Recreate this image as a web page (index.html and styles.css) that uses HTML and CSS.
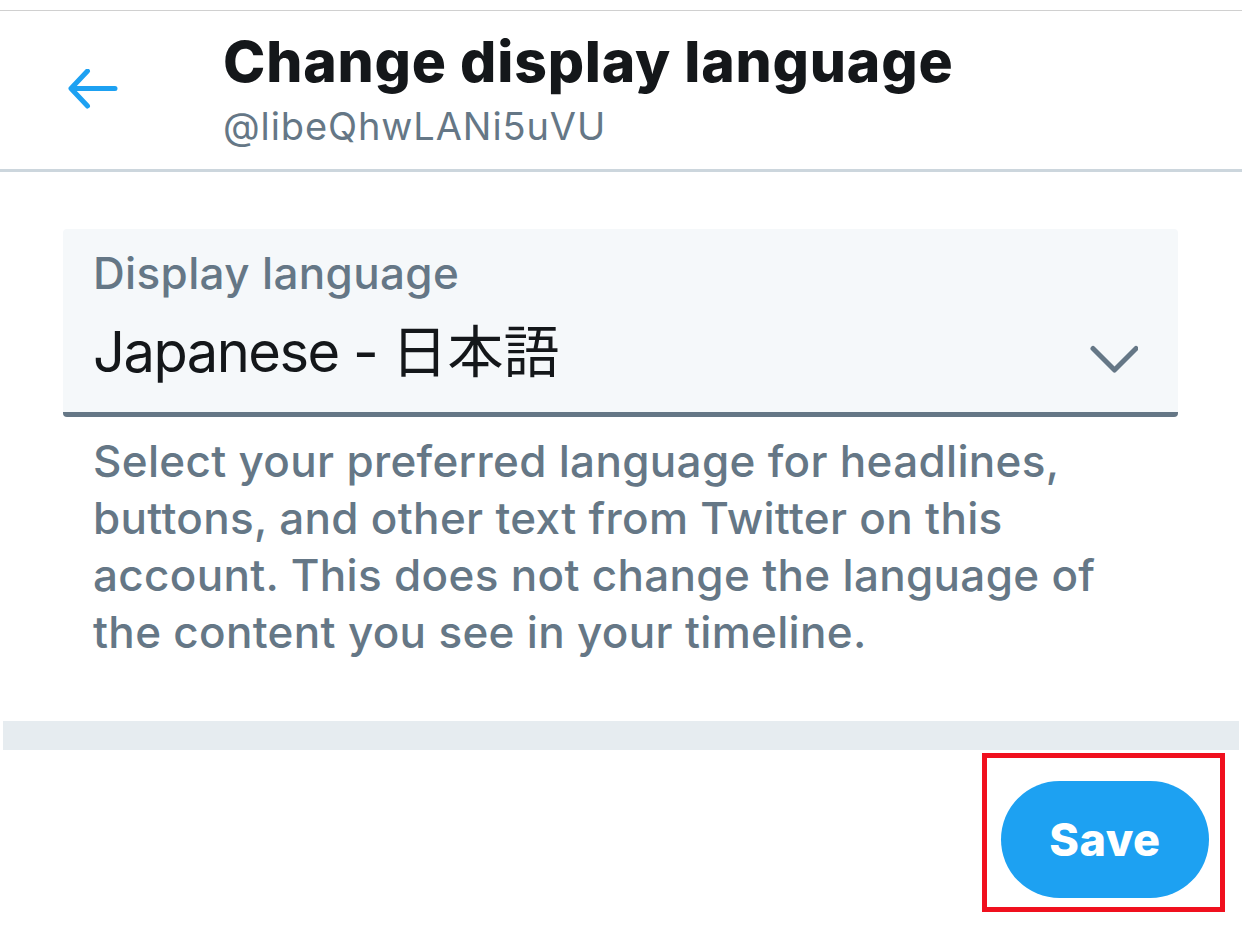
FILE: index.html
```html
<!DOCTYPE html>
<html lang="en">
<head>
<meta charset="utf-8">
<title>Change display language</title>
<link rel="stylesheet" href="styles.css">
</head>
<body>
<div class="topline"></div>
<header class="header">
  <div class="back">
    <svg class="back-icon" width="50" height="40" viewBox="0 0 50 40">
      <path d="M47 19.5H3.5M19.5 2L3 19.5L19.5 37" fill="none" stroke="#1da1f2" stroke-width="5" stroke-linecap="round" stroke-linejoin="round"/>
    </svg>
  </div>
  <div class="titles">
    <div class="title">Change display language</div>
    <div class="handle">@libeQhwLANi5uVU</div>
  </div>
</header>
<main class="content">
  <div class="select">
    <div class="select-text">
      <div class="select-label">Display language</div>
      <div class="select-value"><span class="latin">Japanese - </span>日本語</div>
    </div>
    <svg class="chevron" width="48" height="30" viewBox="0 0 48 30">
      <path d="M3 3.5L24.5 25L46 3.5" fill="none" stroke="#657786" stroke-width="5" stroke-linecap="round" stroke-linejoin="round"/>
    </svg>
  </div>
  <p class="desc">Select your preferred language for headlines, buttons, and other text from Twitter on this account. This does not change the language of the content you see in your timeline.</p>
</main>
<div class="divider"></div>
<div class="actions">
  <div class="save-wrap">
    <button class="save">Save</button>
    <div class="highlight"></div>
  </div>
</div>
</body>
</html>
```

FILE: styles.css
```css
html, body {
  margin: 0;
  padding: 0;
  background: #ffffff;
}
body {
  font-family: Inter, "Noto Sans", "Noto Sans CJK JP", sans-serif;
  width: 1242px;
  height: 932px;
  overflow: hidden;
}
.topline {
  height: 10px;
  border-bottom: 1px solid #d0d0d0;
}
.header {
  display: flex;
  align-items: center;
  padding: 17px 0 20px 68px;
  border-bottom: 3px solid #ccd6dd;
}
.back {
  width: 50px;
  height: 40px;
  margin-right: 105px;
  display: flex;
}
.titles {
  display: flex;
  flex-direction: column;
  gap: 8px;
}
.title {
  font-size: 57px;
  line-height: 68px;
  font-weight: 800;
  color: #14171a;
  letter-spacing: 0.8px;
}
.handle {
  font-size: 38px;
  line-height: 45px;
  font-weight: 400;
  color: #657786;
  letter-spacing: 0.9px;
}
.content {
  padding: 57px 64px 0 63px;
}
.select {
  display: flex;
  align-items: flex-start;
  background: #f5f8fa;
  border-bottom: 5px solid #657786;
  border-radius: 4px;
  padding: 16px 40px 25px 30px;
}
.select-text {
  flex: 1;
  display: flex;
  flex-direction: column;
  gap: 15px;
}
.select-label {
  font-size: 44px;
  line-height: 57px;
  font-weight: 500;
  color: #657786;
  letter-spacing: 0.35px;
}
.select-value {
  font-size: 56px;
  line-height: 70px;
  font-weight: 400;
  color: #14171a;
}
.latin {
  letter-spacing: -1.5px;
}
.chevron {
  margin-top: 100px;
}
.desc {
  margin: 16px 0 0 0;
  padding: 0 30px 0 30px;
  font-size: 44px;
  line-height: 57px;
  font-weight: 500;
  color: #657786;
  letter-spacing: 0.32px;
}
.divider {
  margin: 60px 3px 0 3px;
  height: 29px;
  background: #e6ecf0;
}
.actions {
  display: flex;
  justify-content: flex-end;
  padding: 31px 33px 0 0;
}
.save-wrap {
  position: relative;
}
.save {
  width: 208px;
  height: 117px;
  border: none;
  border-radius: 59px;
  background: #1da1f2;
  color: #ffffff;
  font-family: Inter, "Noto Sans", sans-serif;
  font-size: 45px;
  font-weight: 800;
  letter-spacing: 0.5px;
  padding: 0;
  display: block;
}
.highlight {
  position: absolute;
  left: -19px;
  top: -28px;
  width: 233px;
  height: 149px;
  border: 5px solid #f0101e;
}
```
